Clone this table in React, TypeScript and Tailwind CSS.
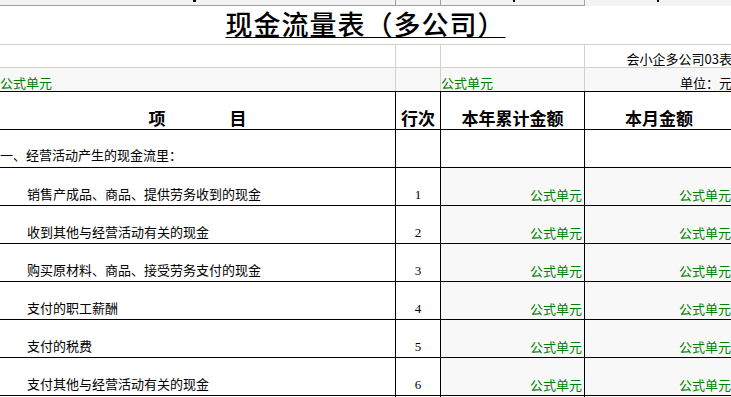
import React from 'react';

const rows = [
  { label: '销售产成品、商品、提供劳务收到的现金', no: '1' },
  { label: '收到其他与经营活动有关的现金', no: '2' },
  { label: '购买原材料、商品、接受劳务支付的现金', no: '3' },
  { label: '支付的职工薪酬', no: '4' },
  { label: '支付的税费', no: '5' },
  { label: '支付其他与经营活动有关的现金', no: '6' },
  { label: '', no: '' },
];

const cjk = { fontFamily: '"Noto Sans CJK SC", "Noto Sans", sans-serif' };
const grid = 'grid grid-cols-[396px_45px_144px_148px]';

export default function App() {
  return (
    <div className="w-[731px] h-[397px] overflow-hidden bg-white text-black" style={cjk}>
      {/* cut-off strip above */}
      <div className={`${grid} h-[6px] bg-[#f3f3f3]`}>
        <div className="relative border-r border-b border-[#a0a0a0]">
          <span className="absolute left-[193px] top-0 w-[3px] h-[2px] bg-black" />
        </div>
        <div className="relative border-r border-b border-[#a0a0a0]" />
        <div className="relative border-r border-b border-[#a0a0a0]">
          <span className="absolute left-[72px] top-0 w-[2px] h-[2px] bg-black" />
        </div>
        <div className="relative">
          <span className="absolute left-[72px] top-0 w-[2px] h-[2px] bg-black" />
        </div>
      </div>

      {/* title */}
      <div className="h-[39px] border-b border-[#d4d0c8] flex items-end justify-center pb-[6px]">
        <span className="text-[27px] leading-[28px] tracking-[1px] font-medium underline underline-offset-[2px] decoration-1">
          现金流量表（多公司）
        </span>
      </div>

      {/* form number */}
      <div className={`${grid} h-[23px] border-b border-[#d4d0c8]`}>
        <div className="border-r border-[#d4d0c8]" />
        <div className="border-r border-[#d4d0c8]" />
        <div className="border-r border-[#d4d0c8]" />
        <div className="flex items-end justify-end pr-[1px] text-[13px] leading-[16px] whitespace-nowrap">会小企多公司03表</div>
      </div>

      {/* unit row */}
      <div className={`${grid} h-[24px] border-b border-black bg-[#f8f8f8]`}>
        <div className="border-r border-[#d4d0c8] flex items-end text-[13px] leading-[16px] text-[#008000]">公式单元</div>
        <div className="border-r border-[#d4d0c8]" />
        <div className="border-r border-[#d4d0c8] flex items-end text-[13px] leading-[16px] text-[#008000]">公式单元</div>
        <div className="flex items-end justify-end pr-[1px] text-[13px] leading-[16px] whitespace-nowrap">单位：元</div>
      </div>

      {/* header */}
      <div className={`${grid} h-[38px] border-b border-black text-[17px] leading-[20px] font-bold`}>
        <div className="border-r border-black flex items-end justify-center gap-[64px] pb-[1px]">
          <span>项</span>
          <span>目</span>
        </div>
        <div className="border-r border-black flex items-end justify-center pb-[1px] whitespace-nowrap">行次</div>
        <div className="border-r border-black flex items-end justify-center pb-[1px]">本年累计金额</div>
        <div className="flex items-end justify-center pb-[1px]">本月金额</div>
      </div>

      {/* section row */}
      <div className={`${grid} h-[38px] border-b border-black text-[13px] leading-[16px]`}>
        <div className="border-r border-black flex items-end pb-[4px] whitespace-nowrap">一、经营活动产生的现金流里：</div>
        <div className="border-r border-black" />
        <div className="border-r border-black" />
        <div />
      </div>

      {rows.map((r, i) => (
        <div key={i} className={`${grid} h-[38px] border-b border-black text-[13px] leading-[16px]`}>
          <div className="border-r border-black flex items-end pl-[27px] pb-[3px] whitespace-nowrap">{r.label}</div>
          <div
            className="border-r border-black flex items-end justify-center pb-[2px]"
            style={{ fontFamily: '"Liberation Serif", serif' }}
          >
            {r.no}
          </div>
          <div className="border-r border-black bg-[#f8f8f8] flex items-end justify-end pr-[2px] pb-[2px] text-[#008000] whitespace-nowrap">
            {r.no && '公式单元'}
          </div>
          <div className="bg-[#f8f8f8] flex items-end justify-end pr-[2px] pb-[2px] text-[#008000] whitespace-nowrap">
            {r.no && '公式单元'}
          </div>
        </div>
      ))}
    </div>
  );
}
